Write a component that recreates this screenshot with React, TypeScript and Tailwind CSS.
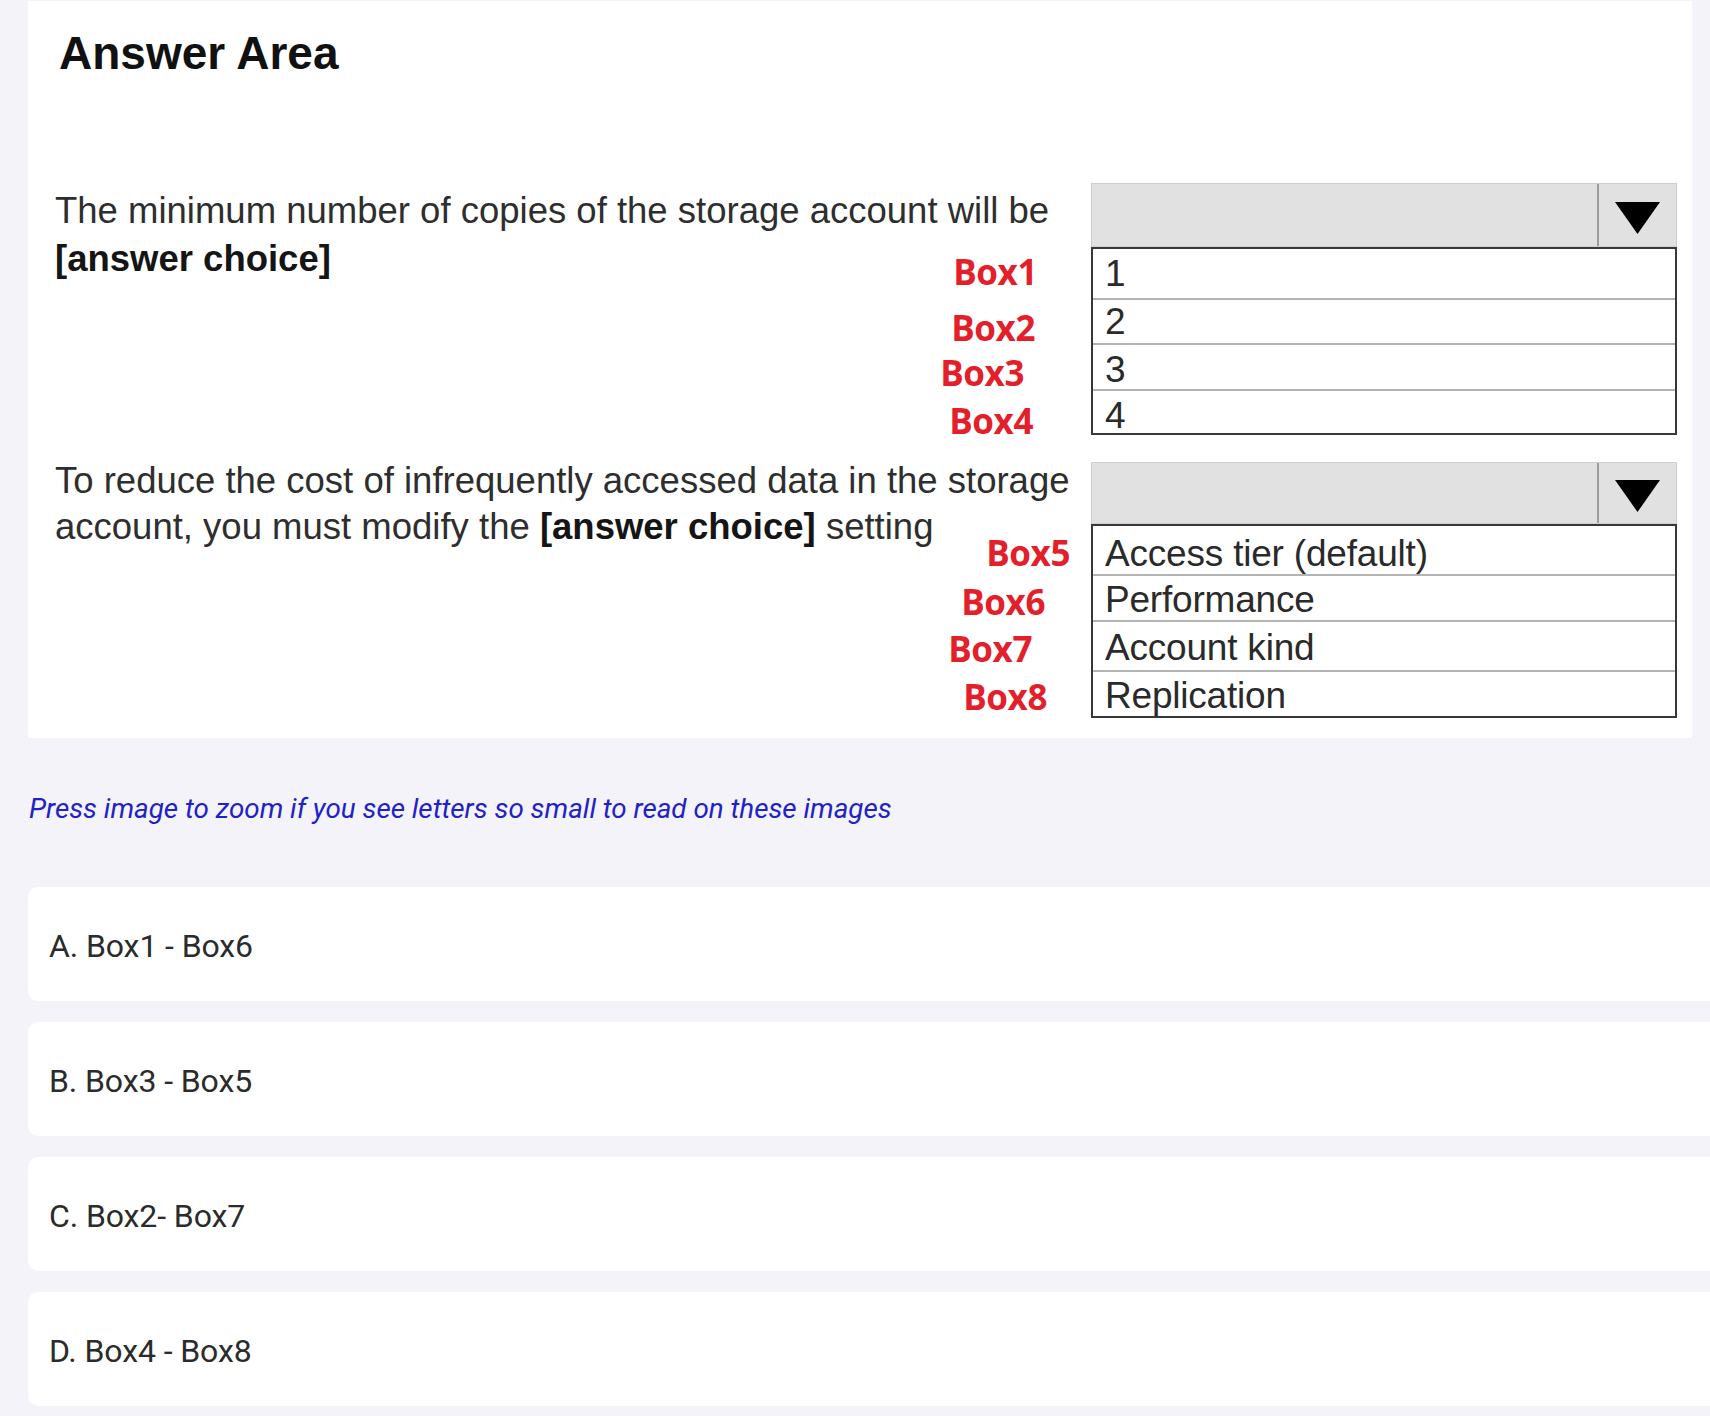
import React from "react";

const sans = "font-['Liberation_Sans',Arial,sans-serif]";

function Arrow() {
  return (
    <svg width="45" height="32" viewBox="0 0 45 32">
      <polygon points="0,0 45,0 22.5,32" fill="#000" />
    </svg>
  );
}

function DropHeader() {
  return (
    <div className="col-start-2 row-start-1 flex border border-[#cfcfcf] bg-[#e1e1e1]">
      <div className="flex-1 border-r-2 border-[#9c9c9c]" />
      <div className="flex w-[77px] items-center justify-center pt-[6px]">
        <Arrow />
      </div>
    </div>
  );
}

function OptionList(props: { items: string[]; heights: number[]; pads: number[] }) {
  return (
    <div
      className={`col-start-2 row-start-2 row-span-4 flex flex-col border-2 border-[#383838] bg-white ${sans}`}
    >
      {props.items.map((item, i) => (
        <div
          key={item}
          style={{ height: props.heights[i], paddingTop: props.pads[i] }}
          className={`flex items-center pl-[12px] text-[37px] leading-none text-[#2a2a2a] tracking-[-0.2px] ${
            i < props.items.length - 1 ? "border-b-2 border-[#b4b4b4]" : ""
          }`}
        >
          {item}
        </div>
      ))}
    </div>
  );
}

function BoxLabel(props: { text: string; row: string; className: string }) {
  return (
    <div
      className={`col-start-1 ${props.row} flex items-center justify-end ${props.className} font-['Open_Sans',sans-serif] text-[35px] font-bold leading-none text-[#e3202a] tracking-[-0.4px]`}
    >
      {props.text}
    </div>
  );
}

function AnswerPanel() {
  return (
    <div className="mt-[1px] ml-[28px] h-[737px] w-[1664px] bg-white pl-[27px] pr-[15px] pt-[29px]">
      <h1 className={`ml-[4px] text-[46px] font-bold leading-none text-[#111] ${sans}`}>
        Answer Area
      </h1>

      <div className="mt-[107px] grid grid-cols-[1fr_586px] grid-rows-[64px_53px_45px_46px_44px]">
        <p
          className={`col-start-1 row-start-1 row-span-5 mt-[4px] self-start whitespace-nowrap text-[36.5px] leading-[48px] text-[#2e2e2e] ${sans}`}
        >
          The minimum number of copies of the storage account will be
          <br />
          <b className="text-[#151515]">[answer choice]</b>
        </p>
        <BoxLabel text="Box1" row="row-start-2" className="mr-[54px] pb-[4px]" />
        <BoxLabel text="Box2" row="row-start-3" className="mr-[56px] pt-[9px]" />
        <BoxLabel text="Box3" row="row-start-4" className="mr-[67px] pt-[8px]" />
        <BoxLabel text="Box4" row="row-start-5" className="mr-[58px] pt-[14px]" />
        <DropHeader />
        <OptionList items={["1", "2", "3", "4"]} heights={[51, 45, 46, 42]} pads={[0, 0, 4, 6]} />
      </div>

      <div className="mt-[27px] grid grid-cols-[1fr_586px] grid-rows-[62px_52px_46px_50px_46px]">
        <p
          className={`col-start-1 row-start-1 row-span-5 -mt-[4px] self-start whitespace-nowrap text-[36.5px] leading-[46px] text-[#2e2e2e] ${sans}`}
        >
          To reduce the cost of infrequently accessed data in the storage
          <br />
          account, you must modify the <b className="text-[#151515]">[answer choice]</b> setting
        </p>
        <BoxLabel text="Box5" row="row-start-2" className="mr-[21px] pt-[5px]" />
        <BoxLabel text="Box6" row="row-start-3" className="mr-[46px] pt-[4px]" />
        <BoxLabel text="Box7" row="row-start-4" className="mr-[59px] pt-[2px]" />
        <BoxLabel text="Box8" row="row-start-5" className="mr-[44px] pt-[2px]" />
        <DropHeader />
        <OptionList
          items={["Access tier (default)", "Performance", "Account kind", "Replication"]}
          heights={[50, 46, 50, 44]}
          pads={[7, 2, 2, 2]}
        />
      </div>
    </div>
  );
}

function Choice(props: { text: string }) {
  return (
    <div className="flex h-[114px] w-[1700px] items-center rounded-[10px] bg-white pl-[21px]">
      <span className="pt-[3px] font-['Roboto',sans-serif] text-[32px] tracking-[-0.1px] text-[#2b2b2b]">
        {props.text}
      </span>
    </div>
  );
}

export default function App() {
  const choices = ["A. Box1 - Box6", "B. Box3 - Box5", "C. Box2- Box7", "D. Box4 - Box8"];

  return (
    <div className="min-h-screen w-full overflow-hidden bg-[#f3f3f9] pb-[9px]">
      <AnswerPanel />

      <p className="ml-[29px] mt-[56px] font-['Roboto',sans-serif] text-[27.8px] italic leading-[30px] text-[#2222c4]">
        Press image to zoom if you see letters so small to read on these images
      </p>

      <div className="ml-[28px] mt-[63px] flex flex-col gap-[21px]">
        {choices.map((c) => (
          <Choice key={c} text={c} />
        ))}
      </div>
    </div>
  );
}
